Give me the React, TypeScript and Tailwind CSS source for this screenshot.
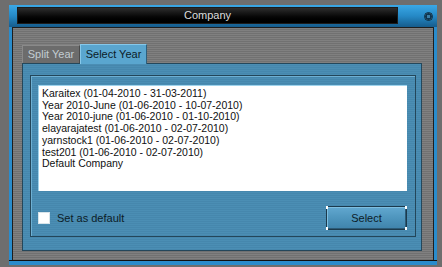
import React from "react";

const items = [
  "Karaitex (01-04-2010 - 31-03-2011)",
  "Year 2010-June (01-06-2010 - 10-07-2010)",
  "Year 2010-june (01-06-2010 - 01-10-2010)",
  "elayarajatest (01-06-2010 - 02-07-2010)",
  "yarnstock1 (01-06-2010 - 02-07-2010)",
  "test201 (01-06-2010 - 02-07-2010)",
  "Default Company",
];

export default function App() {
  return (
    <div className="w-[442px] h-[267px] bg-[#6e6e6e] pt-[5px] pl-[9px] pr-[5px] pb-[2px] flex flex-col font-['Liberation_Sans',Arial,sans-serif] overflow-hidden">
      {/* title row */}
      <div className="h-[22px] flex bg-gradient-to-b from-[#3aa8e6] via-[#2589c6] to-[#165c8c] shrink-0">
        <div className="w-[8px]" />
        <div className="flex-1 mt-[2px] mb-[3px] bg-gradient-to-b from-[#2e2e2e] via-[#0c0c0c] to-[#000000] border border-[#1c1c1c] flex items-center justify-center text-[#dcdcdc] text-[11px]">
          Company
        </div>
        <div className="w-[39px] flex items-center justify-end pr-[4px]">
          <div className="w-[9px] h-[9px] rounded-full bg-[radial-gradient(circle,#3b7fa8_0px,#3b7fa8_1.5px,#0e3550_2px,#0e3550_3px,#5d8fb0_3.5px,#1b4e70_4.5px)] border border-[#0b2a3e]" />
        </div>
      </div>
      {/* body */}
      <div className="flex-1 flex min-h-0">
        <div className="w-[3px] bg-[#2a8ccc]" />
        <div className="flex-1 flex flex-col border-l border-t border-r border-[#1e1e1e] bg-[repeating-linear-gradient(to_bottom,#808080_0px,#808080_1px,#717171_1px,#717171_2px)] pt-[16px] pl-[9px] pr-[11px] pb-[9px]">
          {/* tabs */}
          <div className="h-[19px] flex items-end shrink-0 text-[11px]">
            <div className="h-[18px] w-[58px] bg-[#6c6c6c] border-t border-l border-[#8a8a8a] border-r border-r-[#4a4a4a] flex items-center justify-center text-[#c3ccd2]">
              Split Year
            </div>
            <div className="relative z-10 h-[20px] -mb-[1px] w-[67px] bg-[#5aa6cf] border-t border-l border-r border-[#86c8ea] border-r-[#2d5f7c] flex items-center justify-center text-[#0c1c28]">
              Select Year
            </div>
          </div>
          {/* panel */}
          <div className="flex-1 flex flex-col border border-[#24475b] bg-[repeating-linear-gradient(to_bottom,#4b8eb4_0px,#4b8eb4_1px,#4687ad_1px,#4687ad_2px)] pt-[11px] pl-[7px] pr-[5px] pb-[13px]">
            <div className="flex-1 flex flex-col border border-[#23465a] shadow-[inset_1px_1px_0_#6fb0d3] pt-[9px] pl-[7px] pr-[8px] pb-[6px]">
              <div className="h-[106px] bg-white border-t border-l border-[#9fd3ec] pt-[2px] pl-[3px] text-[10.5px] leading-[11.7px] text-[#101010]">
                {items.map((t) => (
                  <div key={t} className="whitespace-nowrap">
                    {t}
                  </div>
                ))}
              </div>
              <div className="mt-[15px] h-[24px] flex items-center justify-between">
                <div className="flex items-center">
                  <div className="w-[12px] h-[12px] bg-white border border-[#d8e4ea]" />
                  <span className="ml-[7px] text-[11px] text-[#0c1c28]">Set as default</span>
                </div>
                <div className="relative w-[81px] h-[24px] border border-[#1c3a4c] bg-gradient-to-b from-[#62a8d0] via-[#4e95bd] to-[#3f83ab] shadow-[inset_1px_1px_0_#7fbfe0,inset_-1px_-1px_0_#2c5a76] flex items-center justify-center text-[11px] text-[#0c1c28]">
                  Select
                  <span className="absolute -left-[1px] -top-[1px] w-[2px] h-[3px] bg-white" />
                  <span className="absolute -right-[1px] -top-[1px] w-[2px] h-[3px] bg-white" />
                  <span className="absolute -left-[1px] -bottom-[1px] w-[2px] h-[3px] bg-white" />
                  <span className="absolute -right-[1px] -bottom-[1px] w-[2px] h-[3px] bg-white" />
                </div>
              </div>
            </div>
          </div>
        </div>
        <div className="w-[3px] bg-[#2a8ccc]" />
      </div>
      <div className="h-[5px] bg-[#2a8ccc] border-t border-[#111] shrink-0" />
    </div>
  );
}
